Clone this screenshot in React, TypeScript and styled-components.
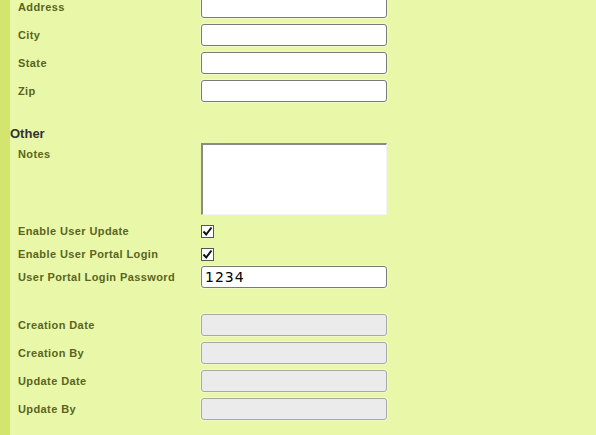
import React from "react";
import styled, { createGlobalStyle } from "styled-components";

const GlobalStyle = createGlobalStyle`
  html, body { margin: 0; padding: 0; background: #e8f8a8; }
  body { font-family: "Liberation Sans", Arial, sans-serif; overflow: hidden; }
`;

const Page = styled.div`
  display: flex;
  min-height: 100vh;
  background: #e8f8a8;
`;

const Strip = styled.div`
  width: 10px;
  flex: none;
  background: #d3e56f;
`;

const Content = styled.div`
  flex: 1;
  display: flex;
  flex-direction: column;
  margin-top: -4px;
`;

const Heading = styled.h3`
  margin: 24px 0 0 0;
  font-family: "Liberation Sans", Arial, sans-serif;
  font-size: 13px;
  line-height: 16px;
  font-weight: bold;
  color: #333333;
`;

const Row = styled.div<{ $mt: number }>`
  display: grid;
  grid-template-columns: 183px 186px;
  align-items: center;
  padding-left: 8px;
  margin-top: ${(p) => p.$mt}px;
  min-height: 22px;
`;

const Label = styled.label<{ $top?: boolean }>`
  box-sizing: border-box;
  font-family: "Liberation Sans", Arial, sans-serif;
  font-size: 11px;
  font-weight: bold;
  letter-spacing: 0.4px;
  height: 22px;
  padding-top: 1px;
  line-height: 21px;
  color: #5b6421;
  white-space: nowrap;
  align-self: ${(p) => (p.$top ? "start" : "center")};
`;

const TextInput = styled.input`
  box-sizing: border-box;
  width: 186px;
  height: 22px;
  margin: 0;
  padding: 0 3px;
  border: 1px solid #7a7a7a;
  border-radius: 3px;
  background: #ffffff;
  box-shadow: 0 0 0 1px rgba(255, 255, 255, 0.35);
  font-family: "DejaVu Sans", Verdana, sans-serif;
  font-size: 14px;
  letter-spacing: 1px;
  color: #000;
  outline: none;

  &:disabled {
    background: #ebebeb;
    border-color: #a8a8a8;
  }
`;

const TextArea = styled.textarea`
  box-sizing: border-box;
  width: 186px;
  height: 72px;
  margin: 0;
  padding: 2px;
  resize: none;
  border-style: solid;
  border-width: 2px 1px 1px 2px;
  border-color: #8a8a8a #f4f4f4 #f4f4f4 #8a8a8a;
  background: #ffffff;
  outline: none;
`;

const CheckBox = styled.span`
  box-sizing: border-box;
  display: inline-flex;
  align-items: center;
  justify-content: center;
  width: 13px;
  height: 13px;
  border: 1px solid #555555;
  background: #ffffff;
`;

const Check = () => (
  <CheckBox role="checkbox" aria-checked="true">
    <svg width="11" height="11" viewBox="0 0 11 11">
      <path d="M1.5 5.5 L4.2 8.5 L9.5 1.5" fill="none" stroke="#111" strokeWidth="2" />
    </svg>
  </CheckBox>
);

export default function App() {
  return (
    <>
      <GlobalStyle />
      <Page>
        <Strip />
        <Content>
          <Row $mt={0}>
            <Label>Address</Label>
            <TextInput />
          </Row>
          <Row $mt={6}>
            <Label>City</Label>
            <TextInput />
          </Row>
          <Row $mt={6}>
            <Label>State</Label>
            <TextInput />
          </Row>
          <Row $mt={6}>
            <Label>Zip</Label>
            <TextInput />
          </Row>

          <Heading>Other</Heading>
          <Row $mt={1}>
            <Label $top>Notes</Label>
            <TextArea />
          </Row>
          <Row $mt={5}>
            <Label>Enable User Update</Label>
            <Check />
          </Row>
          <Row $mt={1}>
            <Label>Enable User Portal Login</Label>
            <Check />
          </Row>
          <Row $mt={1}>
            <Label>User Portal Login Password</Label>
            <TextInput defaultValue="1234" />
          </Row>

          <Row $mt={26}>
            <Label>Creation Date</Label>
            <TextInput disabled />
          </Row>
          <Row $mt={6}>
            <Label>Creation By</Label>
            <TextInput disabled />
          </Row>
          <Row $mt={6}>
            <Label>Update Date</Label>
            <TextInput disabled />
          </Row>
          <Row $mt={6}>
            <Label>Update By</Label>
            <TextInput disabled />
          </Row>
        </Content>
      </Page>
    </>
  );
}
